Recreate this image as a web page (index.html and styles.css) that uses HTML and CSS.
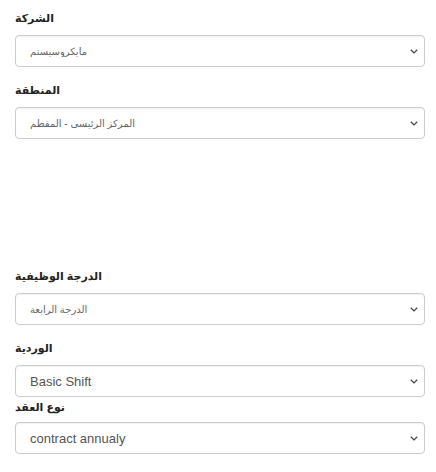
FILE: index.html
```html
<!DOCTYPE html>
<html>
    <head>
        <title>بيانات الموظف</title>
        <meta charset="UTF-8">
        <link rel="stylesheet" href="styles.css">
    </head>
    <body>
        <div class="form">
            <div class="field">
                <label class="field-label" for="company">الشركة</label>
                <select class="control control-ar" id="company">
                    <option>مايكروسيستم</option>
                </select>
            </div>
            <div class="field">
                <label class="field-label" for="region">المنطقة</label>
                <select class="control control-ar" id="region">
                    <option>المركز الرئيسى - المقطم</option>
                </select>
            </div>
            <div class="field field-far">
                <label class="field-label" for="grade">الدرجة الوظيفية</label>
                <select class="control control-ar" id="grade">
                    <option>الدرجة الرابعة</option>
                </select>
            </div>
            <div class="field">
                <label class="field-label" for="shift">الوردية</label>
                <select class="control" id="shift">
                    <option>Basic Shift</option>
                </select>
            </div>
            <div class="field field-tight">
                <label class="field-label" for="contract">نوع العقد</label>
                <select class="control" id="contract">
                    <option>contract annualy</option>
                </select>
            </div>
        </div>
    </body>
</html>
```

FILE: styles.css
```css
body{
    margin: 0;
    background: #fff;
    font-family: "Liberation Sans", "DejaVu Sans", sans-serif;
    color: #333;
}

.form{
    padding: 9px 11px 0px 15px;
}

.field{
    display: flex;
    flex-direction: column;
    margin-top: 14px;
}

.field:first-child{
    margin-top: 0px;
}

.field-far{
    margin-top: 128px;
}

.field-tight{
    margin-top: 1px;
}

.field-tight .field-label{
    margin-bottom: 6px;
}

.field-label{
    font-size: 11px;
    font-weight: bold;
    line-height: 18px;
    margin-bottom: 8px;
    color: #222;
}

.control{
    appearance: none;
    -webkit-appearance: none;
    height: 32px;
    padding: 0px 24px 0px 14px;
    border: 1px solid #ccc;
    border-radius: 4px;
    box-shadow: inset 0 1px 1px rgba(0,0,0,.06);
    background: #fff url("data:image/svg+xml;utf8,<svg xmlns='http://www.w3.org/2000/svg' width='8' height='5' viewBox='0 0 8 5'><path d='M0.8 0.8 L4 3.9 L7.2 0.8' fill='none' stroke='%23444' stroke-width='1.3'/></svg>") no-repeat right 6px center;
    background-size: 8px 5px;
    font-family: "Liberation Sans", "DejaVu Sans", sans-serif;
    font-size: 13px;
    color: #555;
    outline: none;
}

.control-ar{
    font-size: 10px;
    color: #666;
}
```
